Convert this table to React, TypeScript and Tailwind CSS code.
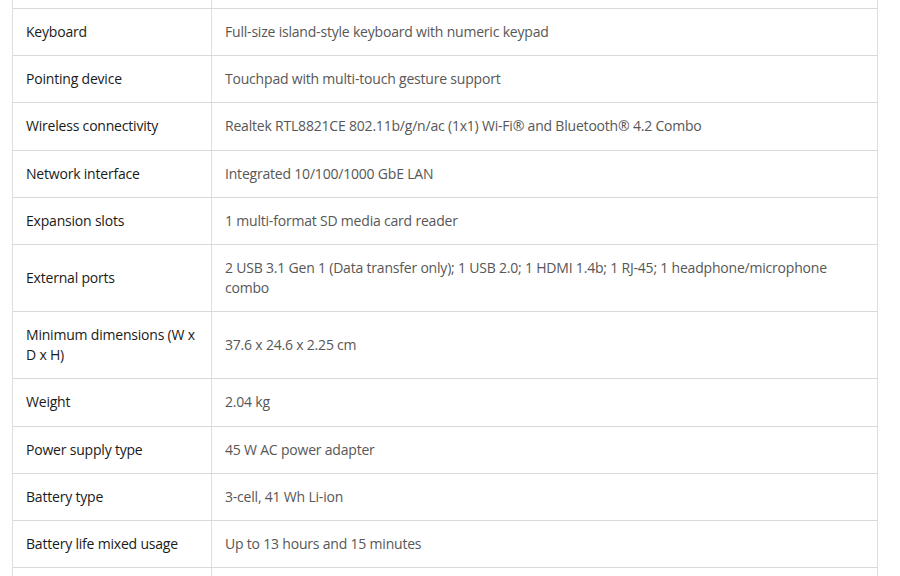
const specs: [string, string][] = [
  ["Keyboard", "Full-size island-style keyboard with numeric keypad"],
  ["Pointing device", "Touchpad with multi-touch gesture support"],
  ["Wireless connectivity", "Realtek RTL8821CE 802.11b/g/n/ac (1x1) Wi-Fi® and Bluetooth® 4.2 Combo"],
  ["Network interface", "Integrated 10/100/1000 GbE LAN"],
  ["Expansion slots", "1 multi-format SD media card reader"],
  ["External ports", "2 USB 3.1 Gen 1 (Data transfer only); 1 USB 2.0; 1 HDMI 1.4b; 1 RJ-45; 1 headphone/microphone combo"],
  ["Minimum dimensions (W x D x H)", "37.6 x 24.6 x 2.25 cm"],
  ["Weight", "2.04 kg"],
  ["Power supply type", "45 W AC power adapter"],
  ["Battery type", "3-cell, 41 Wh Li-ion"],
  ["Battery life mixed usage", "Up to 13 hours and 15 minutes"],
]

export default function App() {
  return (
    <div className="h-[576px] w-[900px] overflow-hidden bg-white font-['Open_Sans',sans-serif]">
      <div className="ml-[12px] w-[866px] border-x border-[#dedede]">
        <div className="grid h-[9px] grid-cols-[199px_1fr] border-b border-[#d9d9d9]">
          <div className="border-r border-[#dedede]" />
          <div />
        </div>
        {specs.map(([label, value]) => (
          <div
            key={label}
            className="grid grid-cols-[199px_1fr] border-b border-[#d9d9d9]"
          >
            <div className="flex items-center border-r border-[#dedede] py-[13.1px] pl-[13px] pr-3 text-[14px] leading-[20px] tracking-[-0.2px] text-[#1a1a1a]">
              {label}
            </div>
            <div className="flex items-center py-[13.1px] pl-[13px] pr-12 text-[14px] leading-[20px] tracking-[-0.2px] text-[#575757]">
              {value}
            </div>
          </div>
        ))}
        <div className="grid h-[40px] grid-cols-[199px_1fr]">
          <div className="border-r border-[#dedede]" />
          <div />
        </div>
      </div>
    </div>
  )
}
